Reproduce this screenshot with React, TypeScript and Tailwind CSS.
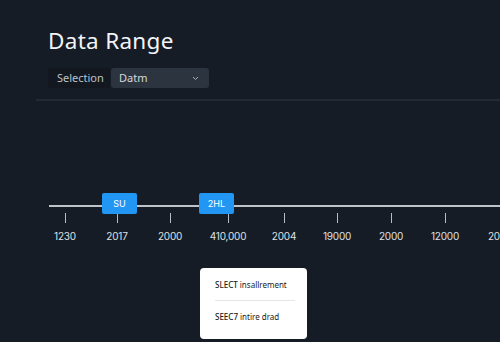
import React from 'react';

const ticks = [
  { x: 65, label: '1230' },
  { x: 117, label: '2017' },
  { x: 170, label: '2000' },
  { x: 228, label: '410,000' },
  { x: 284, label: '2004' },
  { x: 337, label: '19000' },
  { x: 391, label: '2000' },
  { x: 445, label: '12000' },
  { x: 500, label: '2000' },
];

const markers = [
  { x: 102, label: 'SU' },
  { x: 199, label: '2HL' },
];

const App: React.FC = () => {
  return (
    <div className="w-[500px] h-[342px] overflow-hidden bg-[#161c25] font-['Inter',sans-serif] text-white">
      <div className="pl-12 pt-[27px]">
        <h1 className="text-[22.5px] leading-[28px] font-normal tracking-[0.3px] text-[#f2f4f7] font-['Noto_Sans',sans-serif]">Data Range</h1>
        <div className="mt-[13px] flex items-center">
          <div className="h-5 w-[62px] bg-[#121720] text-[11px] text-[#bcc2ca] flex items-center pl-[9px] font-['Noto_Sans',sans-serif]">
            Selection
          </div>
          <div className="ml-px h-5 w-[98px] rounded-[3px] bg-[#2c343f] flex items-center justify-between pl-2 pr-2.5 text-[11px] text-[#d4d8de] font-['Noto_Sans',sans-serif]">
            <span>Datm</span>
            <svg width="7" height="5" viewBox="0 0 7 5" fill="none">
              <path d="M1 1l2.5 2.5L6 1" stroke="#aab1bb" strokeWidth="1" />
            </svg>
          </div>
        </div>
      </div>
      <div className="ml-9 mt-[11px] h-[2px] bg-[#232a34]" />

      <div className="relative h-[60px] mt-[92px]">
        <div className="absolute left-[49px] right-0 top-[12px] h-[2px] bg-[#bfc3ca]" />
        {ticks.map((t) => (
          <React.Fragment key={t.x}>
            <div className="absolute top-[20px] w-px h-[10px] bg-[#b8bcc4]" style={{ left: t.x }} />
            <div
              className="absolute top-[36px] -translate-x-1/2 text-[10px] text-[#dde1e6] whitespace-nowrap tracking-[-0.2px]"
              style={{ left: t.x }}
            >
              {t.label}
            </div>
          </React.Fragment>
        ))}
        {markers.map((m) => (
          <div
            key={m.x}
            className="absolute top-0 h-[21px] w-[35px] rounded-[2px] bg-[#2196f3] text-[9px] text-white flex items-center justify-center"
            style={{ left: m.x }}
          >
            {m.label}
          </div>
        ))}
      </div>

      <div className="ml-[200px] mt-[15px] w-[107px] h-[71px] rounded-[4px] bg-white px-[15px] pt-[12px] text-[8px] text-[#222] font-['Noto_Sans',sans-serif]">
        <div className="leading-[10px]"><span className="font-medium">SLECT</span> insallrement</div>
        <div className="mt-[10px] h-px bg-[#e6e6e6] w-[80px]" />
        <div className="mt-[11px] leading-[10px]"><span className="font-medium">SEEC7</span> intire drad</div>
      </div>
    </div>
  );
};

export default App;
